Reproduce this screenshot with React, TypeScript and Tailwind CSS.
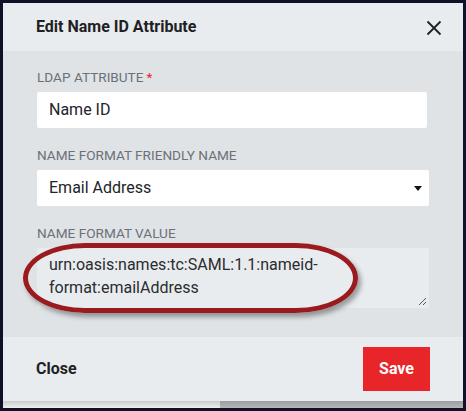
import React from "react";

function Label({ text, required }: { text: string; required?: boolean }) {
  return (
    <div className="h-5 text-[13.6px] leading-5 uppercase text-[#6b7177] mb-[5px]">
      {text}
      {required && <span className="text-[#e8262a] ml-[3px]">*</span>}
    </div>
  );
}

export default function App() {
  return (
    <div className="w-[466px] h-[411px] bg-[#10102a] p-[3px] font-['Roboto','Liberation_Sans',sans-serif]">
      <div className="flex flex-col w-[460px] h-[405px]">
        {/* dialog */}
        <div className="flex flex-col h-[398px]">
          {/* header */}
          <div className="h-[48px] shrink-0 bg-[#e9ecef] flex items-center justify-between pl-[33px] pr-[20px]">
            <h1 className="text-[16px] font-bold text-[#1e2124]">Edit Name ID Attribute</h1>
            <svg width="18" height="18" viewBox="0 0 18 18" className="mt-[1px]">
              <path d="M2.5 2.5 L15.5 15.5 M15.5 2.5 L2.5 15.5" stroke="#1e2124" strokeWidth="1.8" fill="none" />
            </svg>
          </div>

          {/* body */}
          <div className="relative flex-1 bg-[#dfe3e6] pt-4 px-[34px]">
            <Label text="LDAP Attribute" required />
            <div className="w-[390px] h-9 bg-white rounded-[2px] flex items-center px-3 text-[16px] text-[#212529]">
              Name ID
            </div>

            <div className="mt-[17px]">
              <Label text="Name Format Friendly Name" />
              <div className="w-[392px] h-9 bg-white rounded-[2px] flex items-center justify-between pl-3 pr-[7px] text-[16px] text-[#212529]">
                <span>Email Address</span>
                <svg width="8" height="5" viewBox="0 0 8 5">
                  <path d="M0 0 H8 L4 5 Z" fill="#111" />
                </svg>
              </div>
            </div>

            <div className="mt-[17px]">
              <Label text="Name Format Value" />
              <div className="relative w-[392px] h-[60px] bg-[#e9ecef] pt-[5px] px-3 text-[16px] leading-[23px] text-[#2a2d30]">
                <div>urn:oasis:names:tc:SAML:1.1:nameid-</div>
                <div>format:emailAddress</div>
                <svg width="9" height="9" viewBox="0 0 9 9" className="absolute right-[2px] bottom-[2px]">
                  <path d="M1 8 L8 1 M5 8 L8 5" stroke="#555" strokeWidth="1" fill="none" />
                </svg>
              </div>
            </div>

            {/* annotation ring */}
            <div className="absolute left-[20px] top-[192px] w-[335px] h-[70px] rounded-[62px/35px] border-[5px] border-[#9a1b1e] shadow-[3px_4px_5px_rgba(0,0,0,0.35)] pointer-events-none" />
          </div>

          {/* footer */}
          <div className="h-[64px] shrink-0 bg-[#e9ecef] flex items-center justify-between pl-[33px] pr-[33px]">
            <button className="text-[16px] font-bold text-[#1e2124]">Close</button>
            <button className="w-[67px] h-[44px] bg-[#e8262a] text-white text-[16px] font-bold">Save</button>
          </div>
        </div>

        {/* shadow strip below dialog */}
        <div className="flex h-[7px]">
          <div className="w-[217px] bg-gradient-to-b from-[#c9cbcd] to-[#eeeff0]" />
          <div className="flex-1 bg-gradient-to-b from-[#9c9fa2] to-[#b3b5b7]" />
        </div>
      </div>
    </div>
  );
}
